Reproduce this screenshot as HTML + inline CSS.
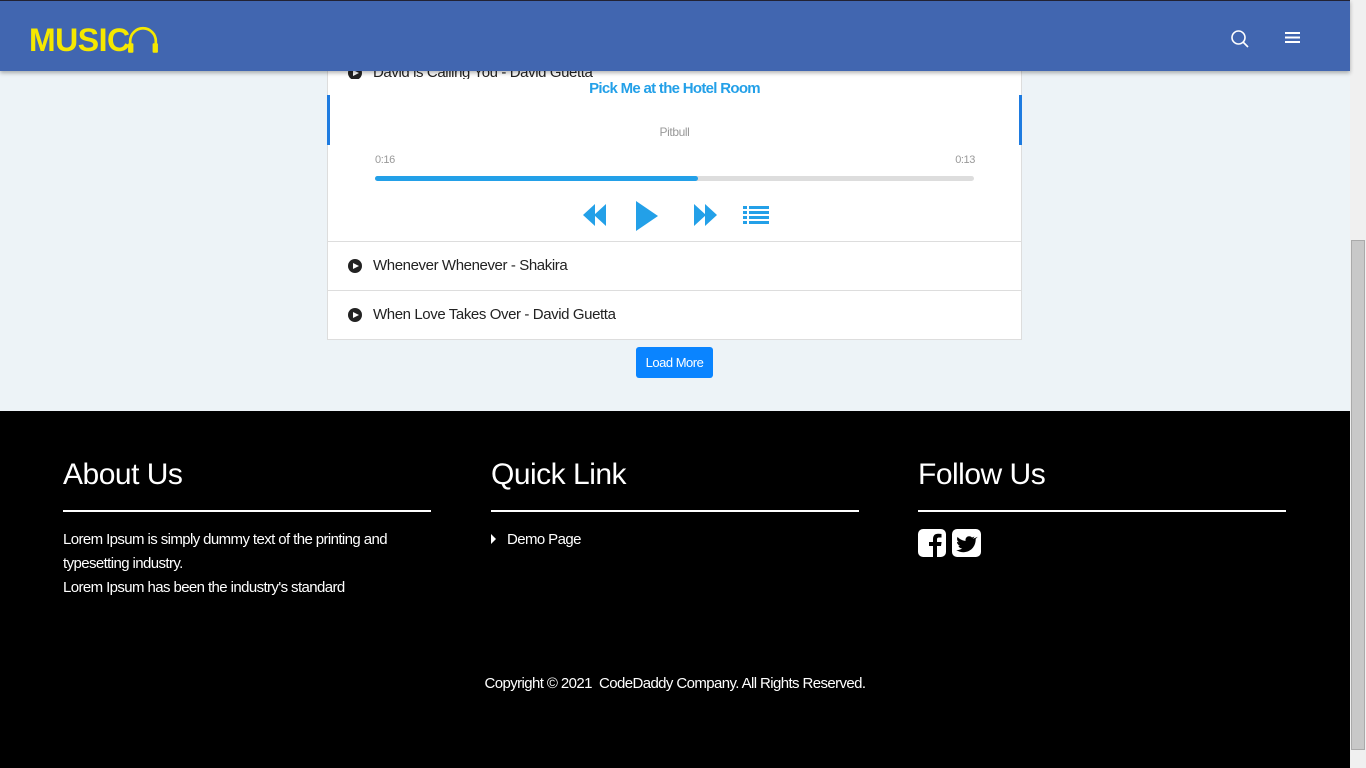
<!DOCTYPE html><html><head><meta charset="utf-8"><style>
*{box-sizing:border-box;margin:0;padding:0}
body{width:1366px;height:768px;overflow:hidden;background:#edf3f7;font-family:"Liberation Sans",sans-serif;position:relative;letter-spacing:-0.4px}
.hdr{position:absolute;left:0;top:0;width:1350px;height:71px;background:#4166b0;border-top:1px solid #223;box-shadow:0 2px 4px rgba(0,0,0,.3);z-index:5}
.logo{position:absolute;left:29px;top:21px;color:#f5e800;font:900 32px "Liberation Sans",sans-serif;letter-spacing:-0.5px;white-space:nowrap}
.card{position:absolute;left:327px;top:40px;width:695px;height:300px;background:#fff;border:1px solid #ddd}
.row{position:absolute;left:0;width:693px;height:49px;border-top:1px solid #ddd;font-size:15px;color:#222}
.row span{position:absolute;left:45px;top:15px}
.row i{position:absolute;left:20px;top:17px;width:14px;height:14px;border-radius:50%;background:#222}
.row i:after{content:"";position:absolute;left:5px;top:3.5px;border-left:6px solid #fff;border-top:3.5px solid transparent;border-bottom:3.5px solid transparent}
.sc{position:absolute;right:0;top:0;width:16px;height:768px;background:#f0f0f0}
.ft{position:absolute;left:0;top:411px;width:1350px;height:357px;background:#000;color:#fff}
.ft h2{position:absolute;top:47px;font-weight:normal;font-size:30px;letter-spacing:-0.5px}
.ft hr{position:absolute;top:99px;width:368px;border:0;border-top:2px solid #fff}
.ft p{position:absolute;font-size:15px;line-height:24px;letter-spacing:-0.6px}
</style></head><body>
<div class="hdr"><div class="logo">MUSIC<svg width="32" height="28" viewBox="0 0 30 26" style="vertical-align:-3px;margin-left:-3px"><path d="M3 22V14a12 12 0 0 1 24 0v8" fill="none" stroke="#f5e800" stroke-width="2.5"/><rect x="1" y="16" width="5" height="9" rx="1" fill="#f5e800"/><rect x="24" y="16" width="5" height="9" rx="1" fill="#f5e800"/></svg></div>
<svg style="position:absolute;left:1230px;top:28px" width="20" height="20" viewBox="0 0 20 20"><circle cx="8.5" cy="8.5" r="6.5" fill="none" stroke="#fff" stroke-width="1.6"/><path d="M13 13l5 5" stroke="#fff" stroke-width="1.6"/></svg>
<svg style="position:absolute;left:1285px;top:30px" width="15" height="13"><path d="M0 2h15M0 6.5h15M0 11h15" stroke="#fff" stroke-width="2"/></svg>
</div>
<div class="card">
<div class="row" style="top:8px;border:0"><i></i><span>David is Calling You - David Guetta</span></div>
<div style="position:absolute;left:0;top:38px;width:693px;height:114px;background:#fff"></div>
<div style="position:absolute;left:-1px;top:54px;width:3px;height:50px;background:#1e7be0"></div>
<div style="position:absolute;right:-1px;top:54px;width:3px;height:50px;background:#1e7be0"></div>
<div style="position:absolute;left:0;top:39px;width:693px;text-align:center;color:#23a0e8;font-weight:bold;font-size:15px;letter-spacing:-0.7px">Pick Me at the Hotel Room</div>
<div style="position:absolute;left:0;top:84px;width:693px;text-align:center;color:#999;font-size:12px">Pitbull</div>
<div style="position:absolute;left:47px;top:113px;color:#999;font-size:11px">0:16</div>
<div style="position:absolute;right:46px;top:113px;color:#999;font-size:11px">0:13</div>
<div style="position:absolute;left:47px;top:135px;width:599px;height:5px;border-radius:3px;background:#ddd"><div style="width:323px;height:5px;border-radius:3px;background:#23a0e8"></div></div>
<svg style="position:absolute;left:255px;top:160px" width="190" height="36" viewBox="0 0 190 36"><path d="M0 14l12-11v22zM11 14l12-11v22z" fill="#23a0e8"/><path d="M53 0l22 15-22 15z" fill="#23a0e8"/><path d="M111 3l12 11-12 11zM122 3l12 11-12 11z" fill="#23a0e8"/><g fill="#23a0e8"><rect x="160" y="5" width="4" height="3"/><rect x="166" y="5" width="20" height="3"/><rect x="160" y="10" width="4" height="3"/><rect x="166" y="10" width="20" height="3"/><rect x="160" y="15" width="4" height="3"/><rect x="166" y="15" width="20" height="3"/><rect x="160" y="20" width="4" height="3"/><rect x="166" y="20" width="20" height="3"/></g></svg>
<div class="row" style="top:200px"><i></i><span>Whenever Whenever - Shakira</span></div>
<div class="row" style="top:249px"><i></i><span>When Love Takes Over - David Guetta</span></div>
</div>
<div style="position:absolute;left:636px;top:347px;width:77px;height:31px;background:#0a84ff;border-radius:3px;color:#fff;font-size:13px;letter-spacing:-0.5px;text-align:center;line-height:31px">Load More</div>
<div class="ft">
<h2 style="left:63px">About Us</h2><hr style="left:63px">
<p style="left:63px;top:117px;width:370px">Lorem Ipsum is simply dummy text of the printing and typesetting industry.<br>Lorem Ipsum has been the industry's standard</p>
<h2 style="left:491px">Quick Link</h2><hr style="left:491px">
<p style="left:491px;top:117px"><span style="display:inline-block;border-left:5px solid #fff;border-top:5px solid transparent;border-bottom:5px solid transparent;margin-right:11px"></span>Demo Page</p>
<h2 style="left:918px">Follow Us</h2><hr style="left:918px">
<svg style="position:absolute;left:918px;top:118px" width="64" height="29" viewBox="0 0 64 29"><rect x="0" y="0" width="28" height="28" rx="5" fill="#fff"/><path d="M19 28V17h4l.6-4H19v-2.5c0-1.2.4-2 2-2h2.5V5c-.5 0-2-.2-3.5-.2-3.3 0-5 2-5 5.4V13h-4v4h4v11z" fill="#000"/><rect x="34" y="0" width="29" height="28" rx="5" fill="#fff"/><path d="M57 9c-.7.3-1.5.5-2.3.6.8-.5 1.4-1.2 1.7-2.1-.8.4-1.6.8-2.5 1-1.6-1.8-4.6-1.6-5.9.5-.5.8-.6 1.9-.4 2.9-3.2-.2-6-1.7-8-4-1 1.8-.5 4.1 1.2 5.3-.6 0-1.2-.2-1.8-.5 0 1.9 1.3 3.5 3.2 3.9-.6.2-1.2.2-1.8.1.5 1.6 2 2.7 3.8 2.7-1.700 1.300-3.800 1.900-6 1.700 9.300 5.500 19.700-.3 19.500-11.300.8-.6 1.500-1.300 2-2z" fill="#000"/></svg>
<p style="left:0;width:1350px;text-align:center;top:261px">Copyright © 2021 &nbsp;CodeDaddy Company. All Rights Reserved.</p>
</div>
<div class="sc"><div style="position:absolute;left:1px;top:240px;width:14px;height:510px;background:#c8c8c8;border:1px solid #aaa"></div></div>
</body></html>
